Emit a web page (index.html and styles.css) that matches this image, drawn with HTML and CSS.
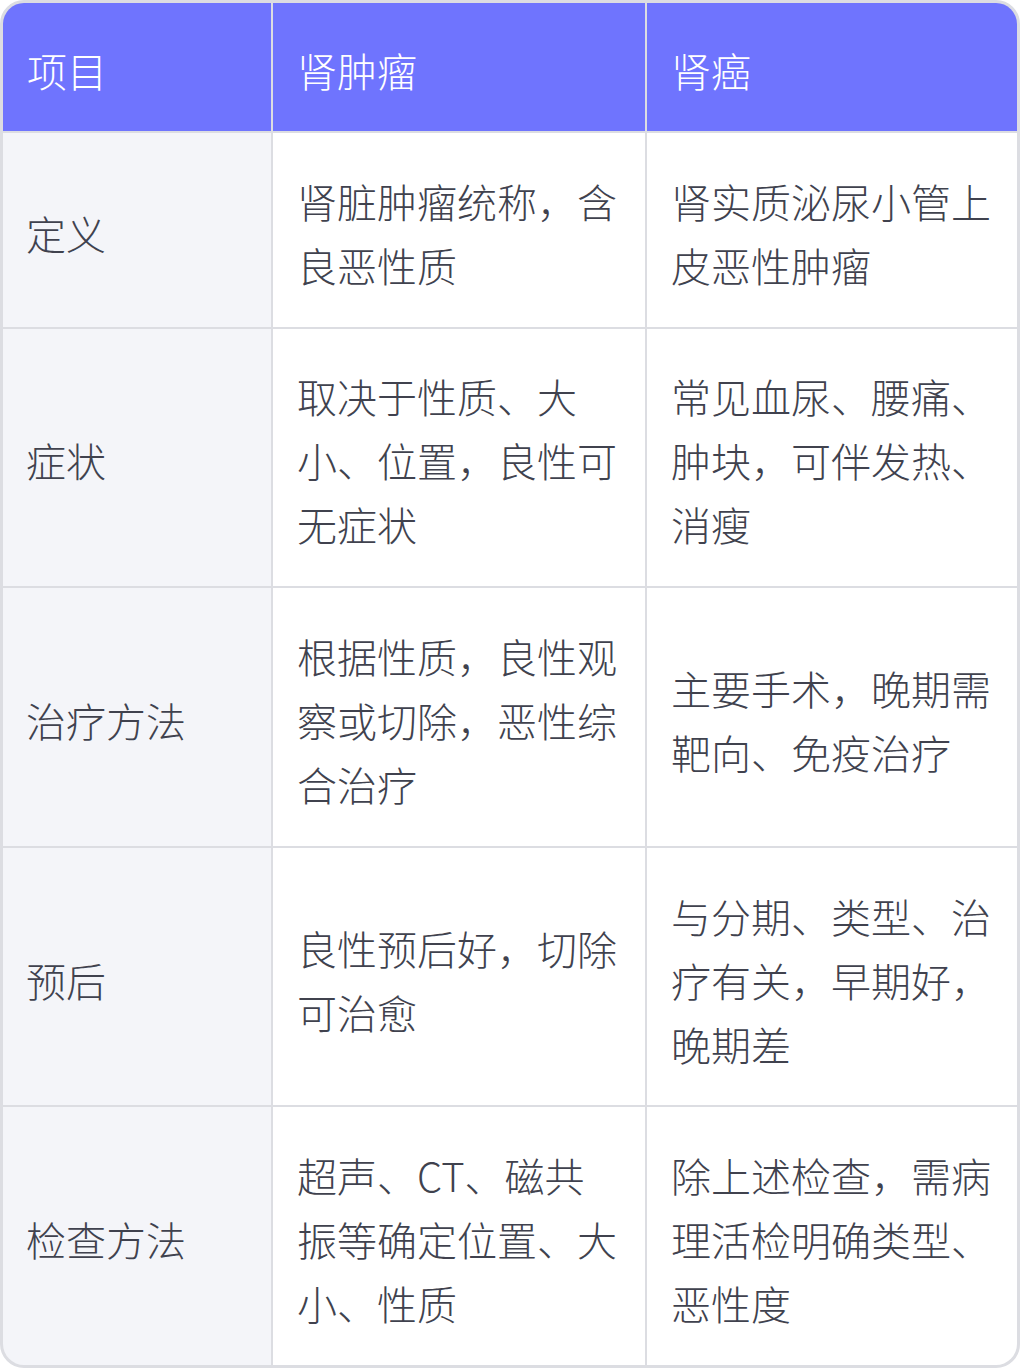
FILE: index.html
```html
<!DOCTYPE html>
<html lang="zh-CN">
<head>
<meta charset="utf-8">
<title>肾肿瘤与肾癌对比</title>
<link rel="stylesheet" href="styles.css">
</head>
<body>
<div class="table">
  <div class="cell head">项目</div>
  <div class="cell head">肾肿瘤</div>
  <div class="cell head">肾癌</div>

  <div class="cell label">定义</div>
  <div class="cell">肾脏肿瘤统称，含良恶性质</div>
  <div class="cell">肾实质泌尿小管上皮恶性肿瘤</div>

  <div class="cell label">症状</div>
  <div class="cell">取决于性质、大小、位置，良性可无症状</div>
  <div class="cell">常见血尿、腰痛、肿块，可伴发热、消瘦</div>

  <div class="cell label">治疗方法</div>
  <div class="cell">根据性质，良性观察或切除，恶性综合治疗</div>
  <div class="cell">主要手术，晚期需靶向、免疫治疗</div>

  <div class="cell label">预后</div>
  <div class="cell">良性预后好，切除可治愈</div>
  <div class="cell">与分期、类型、治疗有关，早期好，晚期差</div>

  <div class="cell label">检查方法</div>
  <div class="cell">超声、CT、磁共振等确定位置、大小、性质</div>
  <div class="cell">除上述检查，需病理活检明确类型、恶性度</div>
</div>
</body>
</html>
```

FILE: styles.css
```css
html, body {
  margin: 0;
  padding: 0;
  background: #ffffff;
}

.table {
  box-sizing: border-box;
  width: 1020px;
  height: 1368px;
  display: grid;
  grid-template-columns: 268px 372px 1fr;
  grid-template-rows: 128px 1fr 1.33fr 1.33fr 1.33fr 1.33fr;
  gap: 2px;
  background: #dcdde2;
  border: 3px solid #dcdde2;
  border-radius: 24px;
  overflow: hidden;
  font-family: "Noto Sans CJK SC", "Noto Sans", sans-serif;
  font-weight: 300;
  font-size: 40px;
  line-height: 64px;
  color: #40424e;
}

.cell {
  background: #ffffff;
  padding: 6px 24px 0 24px;
  display: flex;
  align-items: center;
}

.cell.head {
  background: #6f74fe;
  color: #ffffff;
}

.cell.label {
  background: #f4f5f9;
  padding-left: 23px;
}
```
